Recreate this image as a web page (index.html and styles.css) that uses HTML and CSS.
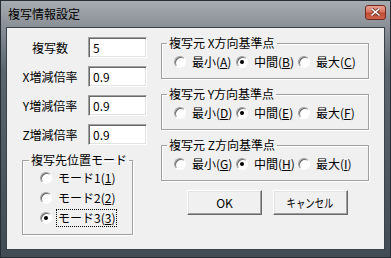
FILE: index.html
```html
<!DOCTYPE html>
<html lang="ja">
<head>
    <meta charset="UTF-8">
    <title>複写情報設定</title>
    <link rel="stylesheet" href="styles.css">
</head>
<body>
    <div class="window">
        <div class="titlebar">
            <span class="title">複写情報設定</span>
            <span class="close-button">
                <svg width="9" height="8" viewBox="0 0 9 8">
                    <path d="M1 1 L8 7 M8 1 L1 7" stroke="#5a1c10" stroke-width="3" stroke-linecap="square"/>
                    <path d="M1 1 L8 7 M8 1 L1 7" stroke="#fff" stroke-width="1.6" stroke-linecap="square"/>
                </svg>
            </span>
        </div>
        <div class="client">
            <div class="left-column">
                <div class="field">
                    <span class="field-label">複写数</span>
                    <div class="edit">5</div>
                </div>
                <div class="field">
                    <span class="field-label">X増減倍率</span>
                    <div class="edit">0.9</div>
                </div>
                <div class="field">
                    <span class="field-label">Y増減倍率</span>
                    <div class="edit">0.9</div>
                </div>
                <div class="field">
                    <span class="field-label">Z増減倍率</span>
                    <div class="edit">0.9</div>
                </div>

                <fieldset class="group mode-group">
                    <legend>複写先位置モード</legend>
                    <div class="option"><span class="radio"></span><span class="option-text">モード1(<u>1</u>)</span></div>
                    <div class="option"><span class="radio"></span><span class="option-text">モード2(<u>2</u>)</span></div>
                    <div class="option"><span class="radio checked"></span><span class="option-text focused">モード3(<u>3</u>)</span></div>
                </fieldset>
            </div>

            <div class="right-column">
                <fieldset class="group axis-group">
                    <legend>複写元 X方向基準点</legend>
                    <div class="option-row">
                        <div class="option"><span class="radio"></span><span class="option-text">最小(<u>A</u>)</span></div>
                        <div class="option"><span class="radio checked"></span><span class="option-text">中間(<u>B</u>)</span></div>
                        <div class="option"><span class="radio"></span><span class="option-text">最大(<u>C</u>)</span></div>
                    </div>
                </fieldset>
                <fieldset class="group axis-group">
                    <legend>複写元 Y方向基準点</legend>
                    <div class="option-row">
                        <div class="option"><span class="radio"></span><span class="option-text">最小(<u>D</u>)</span></div>
                        <div class="option"><span class="radio checked"></span><span class="option-text">中間(<u>E</u>)</span></div>
                        <div class="option"><span class="radio"></span><span class="option-text">最大(<u>F</u>)</span></div>
                    </div>
                </fieldset>
                <fieldset class="group axis-group">
                    <legend>複写元 Z方向基準点</legend>
                    <div class="option-row">
                        <div class="option"><span class="radio"></span><span class="option-text">最小(<u>G</u>)</span></div>
                        <div class="option"><span class="radio checked"></span><span class="option-text">中間(<u>H</u>)</span></div>
                        <div class="option"><span class="radio"></span><span class="option-text">最大(<u>I</u>)</span></div>
                    </div>
                </fieldset>

                <div class="buttons">
                    <button class="push-button">OK</button>
                    <button class="push-button"><span class="narrow">キャンセル</span></button>
                </div>
            </div>
        </div>
    </div>
</body>
</html>
```

FILE: styles.css
```css
body {
    margin: 0;
    background-color: #2f3840;
    font-family: "Noto Sans CJK JP", "Noto Sans", sans-serif;
    font-size: 12px;
    color: #000;
}

.window {
    width: 391px;
    height: 258px;
    box-sizing: border-box;
    border: 1px solid #262e35;
    background: linear-gradient(#a7acb1, #8b9197 24px, #5c656d 70px, #424b54);
    display: flex;
    flex-direction: column;
}

.titlebar {
    height: 26px;
    display: flex;
    align-items: center;
    justify-content: space-between;
    padding: 0 4px 0 7px;
    flex-shrink: 0;
}

.title {
    font-size: 12px;
    line-height: 14px;
    margin-top: -1px;
}

.close-button {
    width: 21px;
    height: 15px;
    box-sizing: border-box;
    border: 1px solid #6e2a1e;
    border-radius: 3px;
    background: linear-gradient(#eaa595, #d9745f 45%, #c04a32 55%, #d0644c);
    display: flex;
    align-items: center;
    justify-content: center;
    margin-top: -4px;
}

.client {
    flex: 1;
    margin: 0 5px 7px 5px;
    border: 1px solid #39424a;
    background-color: #f0f0f0;
    display: flex;
    padding: 8px 0 0 13px;
}

.left-column {
    width: 127px;
    padding-top: 1px;
}

.field {
    display: flex;
    align-items: center;
    height: 21px;
    margin-bottom: 8px;
}

.field-label {
    width: 60px;
    margin-right: 8px;
    text-align: center;
    line-height: 14px;
}

.edit {
    width: 59px;
    height: 21px;
    box-sizing: border-box;
    background-color: #fff;
    border: 1px solid;
    border-color: #a0a0a0 #fff #fff #a0a0a0;
    box-shadow: inset 1px 1px 0 #696969, inset -1px -1px 0 #e3e3e3;
    padding: 3px 0 0 4px;
    line-height: 14px;
}

.group {
    margin: 0;
    padding: 0;
    border: 1px solid #a0a0a0;
    box-shadow: 1px 1px 0 #fff, inset 1px 1px 0 #fff;
    min-width: 0;
}

.group legend {
    padding: 0 2px;
    margin-left: 6px;
    line-height: 14px;
    white-space: nowrap;
}

.mode-group {
    width: 111px;
    box-sizing: border-box;
    margin: 3px 0 0 2px;
    padding: 1px 0 6px 0;
}

.mode-group .option {
    margin-left: 17px;
}

.option {
    display: flex;
    align-items: center;
    height: 20px;
}

.radio {
    position: relative;
    width: 12px;
    height: 12px;
    box-sizing: border-box;
    border-radius: 50%;
    border: 1px solid;
    border-color: #a0a0a0 #fff #fff #a0a0a0;
    box-shadow: inset 1px 1px 0 #696969;
    background-color: #fff;
    margin-right: 5px;
    flex-shrink: 0;
}

.radio.checked::after {
    content: "";
    position: absolute;
    left: 3px;
    top: 3px;
    width: 4px;
    height: 4px;
    border-radius: 50%;
    background-color: #000;
}

.option-text {
    line-height: 14px;
    padding: 1px 1px;
}

.option-text.focused {
    outline: 1px dotted #000;
    outline-offset: 0;
}

.right-column {
    width: 208px;
    margin-left: 14px;
}

.axis-group {
    width: 208px;
    box-sizing: border-box;
    padding: 2px 0 6px 0;
    margin-bottom: 8px;
}

.axis-group legend {
    margin-left: 5px;
}

.option-row {
    display: flex;
    margin-left: 12px;
}

.option-row .option {
    width: 62px;
}

.buttons {
    display: flex;
    gap: 11px;
    padding-left: 26px;
    margin-top: 9px;
}

.push-button {
    width: 75px;
    height: 25px;
    box-sizing: border-box;
    font-family: "Noto Sans CJK JP", "Noto Sans", sans-serif;
    font-size: 12px;
    color: #000;
    background-color: #f0f0f0;
    border: 1px solid;
    border-color: #fff #696969 #696969 #fff;
    box-shadow: inset -1px -1px 0 #a0a0a0, inset 1px 1px 0 #e3e3e3;
    padding: 0;
    line-height: 14px;
}

.narrow {
    display: inline-block;
    transform: scaleX(0.78);
}
```
